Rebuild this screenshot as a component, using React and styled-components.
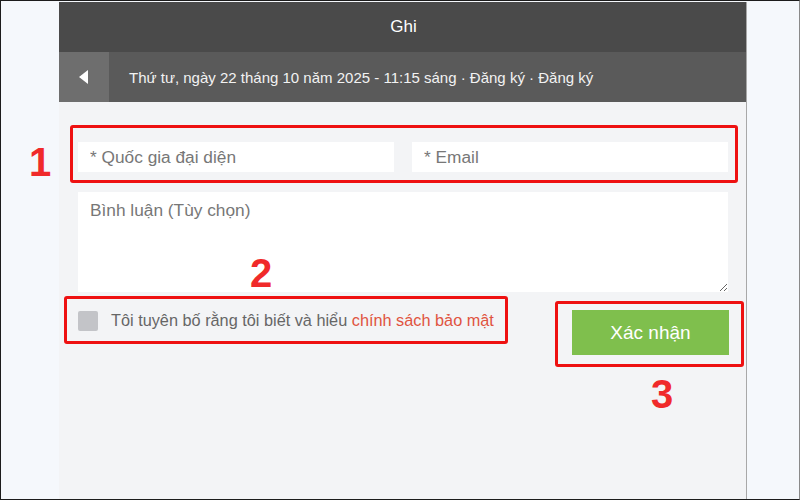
import React from 'react'
import styled, { createGlobalStyle } from 'styled-components'

const GlobalStyle = createGlobalStyle`
  html, body {
    margin: 0;
    padding: 0;
  }
  body {
    width: 800px;
    height: 500px;
    overflow: hidden;
    font-family: Arial, "Liberation Sans", sans-serif;
    background: #f5f8fc;
  }
  * { box-sizing: border-box; }
`

const Frame = styled.div`
  position: relative;
  width: 800px;
  height: 500px;
  border: 1px solid #1c1c1c;
  border-right-color: #8a8a8a;
  padding: 1px 0 0 58px;
  background: #f5f8fc;
`

const Panel = styled.div`
  width: 688px;
  height: 100%;
  background: #f3f4f6;
  border-right: 1px solid #a8a8a8;
  display: flex;
  flex-direction: column;
`

const Header = styled.div`
  height: 50px;
  background: #4a4a4a;
  color: #fff;
  font-size: 17px;
  display: flex;
  align-items: center;
  justify-content: center;
  padding-left: 2px;
`

const SubBar = styled.div`
  height: 50px;
  background: #5a5a5a;
  display: flex;
  align-items: stretch;
`

const BackButton = styled.div`
  width: 50px;
  background: #6e6e6e;
  display: flex;
  align-items: center;
  justify-content: center;
`

const Triangle = styled.span`
  width: 0;
  height: 0;
  border-top: 7px solid transparent;
  border-bottom: 7px solid transparent;
  border-right: 9px solid #fff;
  margin-left: -2px;
`

const DateLine = styled.div`
  display: flex;
  align-items: center;
  padding-left: 20px;
  color: #f2f2f2;
  font-size: 15px;
`

const Content = styled.div`
  flex: 1;
  padding: 40px 18px 0 19px;
  display: flex;
  flex-direction: column;
`

const InputRow = styled.div`
  display: flex;
  gap: 18px;
`

const Input = styled.input`
  flex: 1;
  min-width: 0;
  height: 30px;
  border: none;
  outline: none;
  background: #fff;
  padding: 0 12px;
  font-family: inherit;
  font-size: 17.3px;
  color: #333;
  &::placeholder { color: #777; }
`

const Comment = styled.textarea`
  margin-top: 20px;
  height: 100px;
  border: none;
  outline: none;
  background: #fff;
  padding: 8px 12px;
  font-family: inherit;
  font-size: 17.3px;
  resize: vertical;
  &::placeholder { color: #777; }
`

const BottomRow = styled.div`
  margin-top: 18px;
  display: flex;
  justify-content: space-between;
  align-items: flex-start;
`

const Consent = styled.label`
  display: flex;
  align-items: center;
  gap: 13px;
  height: 21px;
  font-size: 16.3px;
  color: #666;
`

const Box = styled.span`
  width: 20px;
  height: 20px;
  border-radius: 2px;
  background: #c3c4c8;
`

const PolicyLink = styled.span`
  color: #e0533f;
`

const Submit = styled.button`
  width: 157px;
  height: 45px;
  border: none;
  background: #7fbf4d;
  color: #fff;
  font-family: inherit;
  font-size: 19px;
  margin-right: -1px;
`

const Callout = styled.div`
  position: absolute;
  left: ${p => p.x}px;
  top: ${p => p.y}px;
  width: ${p => p.w}px;
  height: ${p => p.h}px;
  border: 3px solid #ee1111;
  border-radius: 3px;
  pointer-events: none;
`

const Mark = styled.div`
  position: absolute;
  left: ${p => p.x}px;
  top: ${p => p.y}px;
  color: #f02a2a;
  font-family: Arial, "Liberation Sans", sans-serif;
  font-weight: 700;
  font-size: 40px;
  line-height: 1;
`

export default function App() {
  return (
    <>
      <GlobalStyle />
      <Frame>
        <Panel>
          <Header>Ghi</Header>
          <SubBar>
            <BackButton><Triangle /></BackButton>
            <DateLine>Thứ tư, ngày 22 tháng 10 năm 2025 - 11:15 sáng · Đăng ký · Đăng ký</DateLine>
          </SubBar>
          <Content>
            <InputRow>
              <Input placeholder="* Quốc gia đại diện" />
              <Input placeholder="* Email" />
            </InputRow>
            <Comment placeholder="Bình luận (Tùy chọn)" />
            <BottomRow>
              <Consent>
                <Box />
                <span>Tôi tuyên bố rằng tôi biết và hiểu <PolicyLink>chính sách bảo mật</PolicyLink></span>
              </Consent>
              <Submit>Xác nhận</Submit>
            </BottomRow>
          </Content>
        </Panel>

        <Callout x={69} y={124} w={668} h={58} />
        <Callout x={63} y={295} w={444} h={48} />
        <Callout x={554} y={300} w={189} h={66} />
        <Mark x={28} y={141}>1</Mark>
        <Mark x={249} y={252}>2</Mark>
        <Mark x={650} y={373}>3</Mark>
      </Frame>
    </>
  )
}
